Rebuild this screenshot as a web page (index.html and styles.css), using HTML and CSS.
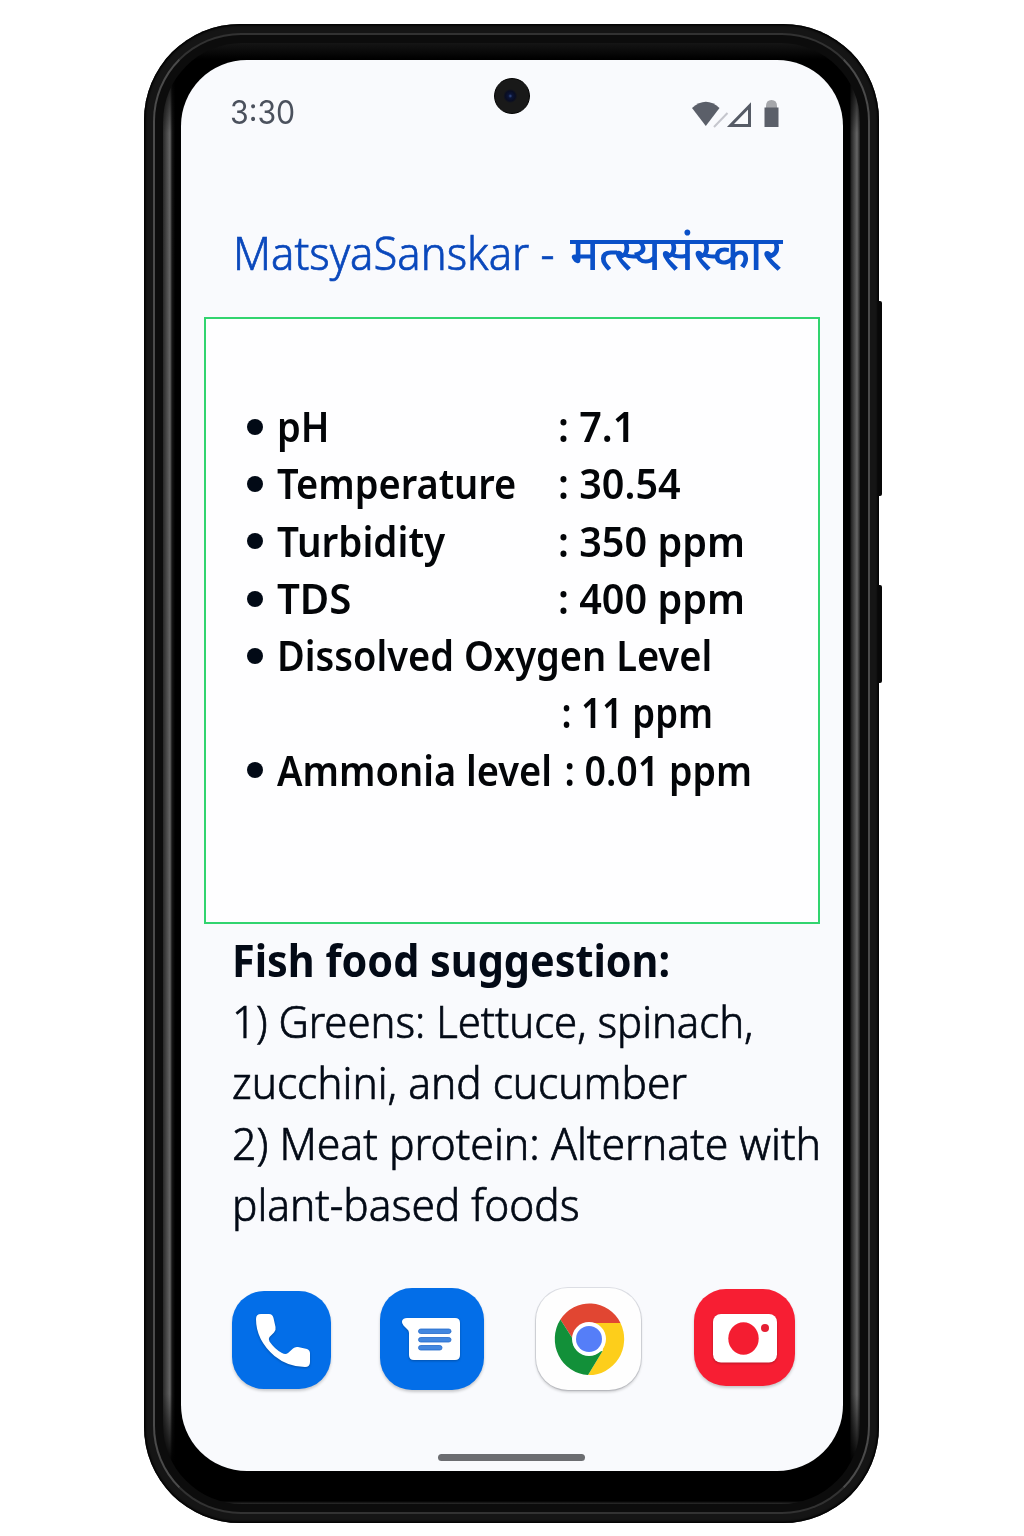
FILE: index.html
```
<!DOCTYPE html>
<html lang="en">
<head>
<meta charset="utf-8">
<title>MatsyaSanskar</title>
<link rel="stylesheet" href="styles.css">
</head>
<body>
<main class="phone">
  <span class="side-key volume"></span>
  <span class="side-key power"></span>
  <div class="rim"><div class="bezel">
    <div class="screen">
      <span class="camera"></span>
      <header class="status">
        <span class="clock">3:30</span>
        <svg class="indicators" width="90" height="30" viewBox="0 0 90 30">
          <path d="M0 7Q14 -5.500 27.500 7L13.800 25Z" fill="#5b5f69"/>
          <path d="M22 26L35.500 12" stroke="#c5c6cd" stroke-width="2"/>
          <path d="M38.500 24.500H57.500V5Z" fill="none" stroke="#565b66" stroke-width="3"/>
          <path d="M74 8V5Q74 -1 79.500 -1T85 5V8Z" fill="#a5a6aa"/>
          <path d="M72.500 6.500H86.500V26H72.500Z" fill="#5b5f69"/>
        </svg>
      </header>
      <h1 class="title"><span class="latin">MatsyaSanskar -</span><span class="hindi" lang="hi">मत्स्यसंस्कार</span></h1>
      <section class="readings">
        <ul class="list">
          <li><span class="name">pH</span><span class="value">: 7.1</span></li>
          <li><span class="name">Temperature</span><span class="value">: 30.54</span></li>
          <li><span class="name turbidity">Turbidity</span><span class="value">: 350 ppm</span></li>
          <li><span class="name tds">TDS</span><span class="value">: 400 ppm</span></li>
          <li class="stacked"><span class="name">Dissolved Oxygen Level</span><span class="value oxygen">: 11 ppm</span></li>
          <li><span class="name">Ammonia level</span><span class="value ammonia">: 0.01 ppm</span></li>
        </ul>
      </section>
      <section class="food">
        <h2 class="food-title">Fish food suggestion:</h2>
        <p class="food-text">
          <span class="line greens">1) Greens: Lettuce, spinach,</span>
          <span class="line">zucchini, and cucumber</span>
          <span class="line protein">2) Meat protein: Alternate with</span>
          <span class="line">plant-based foods</span>
        </p>
      </section>
      <nav class="dock">
        <span class="app phone-app">
          <svg width="99" height="98" viewBox="0 0 99 98"><path d="M24 28Q24 23 29 23H37Q40.500 23 41.500 27L43.500 36Q44.200 39 42 41.500L37.500 46Q36 48 37.500 50.500Q43 58.500 50 62Q53.500 64 56 62L61 57.500Q63 55.500 66 56L75 58Q78 59 78 62.500V71Q78 76 73 76Q56 76 42.500 65Q24 49 24 28Z" fill="#fff"/></svg>
        </span>
        <span class="app message-app">
          <svg width="104" height="102" viewBox="0 0 104 102"><path d="M27 30H75Q80 30 80 35V67Q80 72 75 72H34Q29 72 29 67V45Q29 42.500 27 41L23.500 37.500Q21.500 35 22 33Q23 30 27 30Z" fill="#fff"/><g fill="#4387df" stroke="#2269cc" stroke-width=".8"><rect x="38.500" y="41" width="32.500" height="4.500" rx="2.200"/><rect x="38.500" y="49.500" width="32.500" height="4.500" rx="2.200"/><rect x="38.500" y="57.500" width="23.500" height="4.500" rx="2.200"/></g></svg>
        </span>
        <span class="app chrome-app">
          <svg width="105" height="102" viewBox="0 0 105 102"><g transform="translate(53 51) scale(.97 1)"><path d="M-29.500 -19.500A36 36 0 0 1 32.500 -16H0L-16 1Z" fill="#e14632"/><path d="M32.500 -16A36 36 0 0 1 -1 36L14 12L16 0L0 -16Z" fill="#fdce1b"/><path d="M-1 36A36 36 0 0 1 -29.500 -19.500L-16 1L0 14L14 12Z" fill="#129039"/></g><circle cx="53" cy="51" r="17" fill="#fff"/><circle cx="53" cy="51" r="13" fill="#557ef8"/></svg>
        </span>
        <span class="app photo-app">
          <svg width="101" height="97" viewBox="0 0 101 97"><rect x="19" y="25" width="64" height="48.500" rx="8" fill="#fff"/><ellipse cx="49.500" cy="49.500" rx="15.200" ry="16.200" fill="#f41d31"/><circle cx="71" cy="39" r="4" fill="#e51f33"/></svg>
        </span>
      </nav>
      <span class="home-bar"></span>
    </div>
  </div></div>
</main>
</body>
</html>
```
FILE: styles.css
```
* { box-sizing: border-box; }

body {
  margin: 0;
  padding: 24px 0 0 144px;
  height: 1536px;
  overflow: hidden;
  background: #fff;
  font-family: "Noto Sans", "Open Sans", sans-serif;
}

h1, h2, p, ul { margin: 0; padding: 0; }

/* Handset body */
.phone {
  position: relative;
  width: 735px;
  height: 1499px;
  padding: 9px;
  border-radius: 96px;
  background: #151515;
  box-shadow: inset 0 0 2px 1.5px #000;
}

.side-key {
  position: absolute;
  right: -3px;
  width: 4px;
  border-radius: 0 2px 2px 0;
  background: #080808;
}
.volume { top: 277px; height: 195px; }
.power { top: 561px; height: 98px; }

.rim {
  height: 100%;
  padding: 8px;
  border: 2px solid;
  border-color: #323232 #4b4b4b;
  border-radius: 88px;
  background: #0c0c0c;
}

.bezel {
  height: 100%;
  padding: 17px 17px 33px 18px;
  border-radius: 79px;
  background:
    linear-gradient(#151515 0, #000 16px, #000 26px, transparent 90px, transparent calc(100% - 110px), #000 calc(100% - 40px), #000 calc(100% - 3px), #2c2c2c),
    linear-gradient(90deg, #282828, #666 7px, #161616 9px, #000 12px, #000 calc(100% - 10px), #222 calc(100% - 9px), #666 calc(100% - 3px), #222);
}

.screen {
  position: relative;
  display: flex;
  flex-direction: column;
  height: 100%;
  border-radius: 66px;
  background: #f9fafd;
}

.camera {
  position: absolute;
  left: 312.5px;
  top: 17.5px;
  width: 36px;
  height: 36px;
  border: 1px solid #000;
  border-radius: 50%;
  background: radial-gradient(circle at 45% 50%, #35508c 0, #0b1437 2px, #090d22 5px, #191919 7px);
}

/* Status bar */
.status {
  display: flex;
  align-items: center;
  justify-content: space-between;
  height: 106px;
  padding: 0 61px 0 49px;
}
.clock {
  font: 400 32px/40px Inter, sans-serif;
  color: #4b515d;
  transform: scaleX(.945);
  transform-origin: left;
}
.indicators { margin-top: 5px; overflow: visible; }

/* Heading */
.title {
  display: flex;
  height: 60px;
  margin-top: 56px;
  padding-left: 52px;
  font-size: 45px;
  line-height: 60px;
  white-space: nowrap;
}
.latin {
  width: 337px;
  padding-top: 1px;
  color: #0a48bc;
  font-weight: 300;
  -webkit-text-stroke: .7px;
  transform: scaleX(.969);
  transform-origin: left;
}
.hindi {
  color: #0a50c8;
  font-size: 48px;
  font-weight: 500;
  transform: scaleX(.985);
  transform-origin: left;
}

/* Sensor readings */
.readings {
  width: 616px;
  height: 607px;
  margin: 35px 0 0 23px;
  padding: 79px 0 0 41px;
  border: 2px solid #32d46f;
  background: #fefeff;
}
.list {
  list-style: none;
  color: #030508;
  font-size: 41px;
  font-weight: 600;
  line-height: 57.3px;
}
.list li {
  display: grid;
  grid-template-columns: 30px 281px 1fr;
  align-items: center;
  white-space: nowrap;
}
.list li::before {
  content: "";
  width: 16px;
  height: 16px;
  border-radius: 50%;
  background: #020a16;
}
.name, .value { transform: scaleX(.927); transform-origin: left; }
.turbidity { transform: scaleX(.94); }
.tds { transform: scaleX(.98); }
.value { transform: scaleX(.965); }
.stacked .name { grid-column: 2 / 4; }
.oxygen { grid-column: 3; padding-left: 4px; transform: scaleX(.89); }
.ammonia { padding-left: 7px; transform: scaleX(.915); }

/* Feeding advice */
.food {
  height: 304px;
  margin-top: 6px;
  padding-left: 51px;
  color: #030a16;
  white-space: nowrap;
}
.food-title {
  font-size: 44px;
  font-weight: 700;
  line-height: 60px;
  transform: scaleX(.94);
  transform-origin: left;
}
.food-text { font-size: 44.5px; font-weight: 300; line-height: 61px; -webkit-text-stroke: .7px; }
.line { display: block; transform: scaleX(.953); transform-origin: left; }
.greens { transform: scaleX(.94); }
.protein { transform: scaleX(.961); }

/* App dock */
.dock {
  display: flex;
  align-items: flex-start;
  height: 120px;
  margin-top: 53px;
  padding-left: 51px;
}
.app {
  border-radius: 32px;
  box-shadow: 0 2px 3px #0003;
}
.app svg { display: block; }
.phone-app svg, .message-app svg, .photo-app svg { filter: drop-shadow(0 1px 1px #0004); }
.phone-app { margin-top: 4px; background: #036ee8; }
.message-app { margin: 1px 0 0 48.5px; background: #036ee8; }
.chrome-app { margin: 1px 0 0 52.5px; background: #fefefe; box-shadow: 0 2px 3px #0003, 0 0 0 1px #dddfe5; }
.photo-app { margin: 2px 0 0 53px; background: #f71e33; }

.home-bar {
  width: 147px;
  height: 7px;
  margin: 47px 0 0 257px;
  border-radius: 4px;
  background: #6c6d71;
}
```
